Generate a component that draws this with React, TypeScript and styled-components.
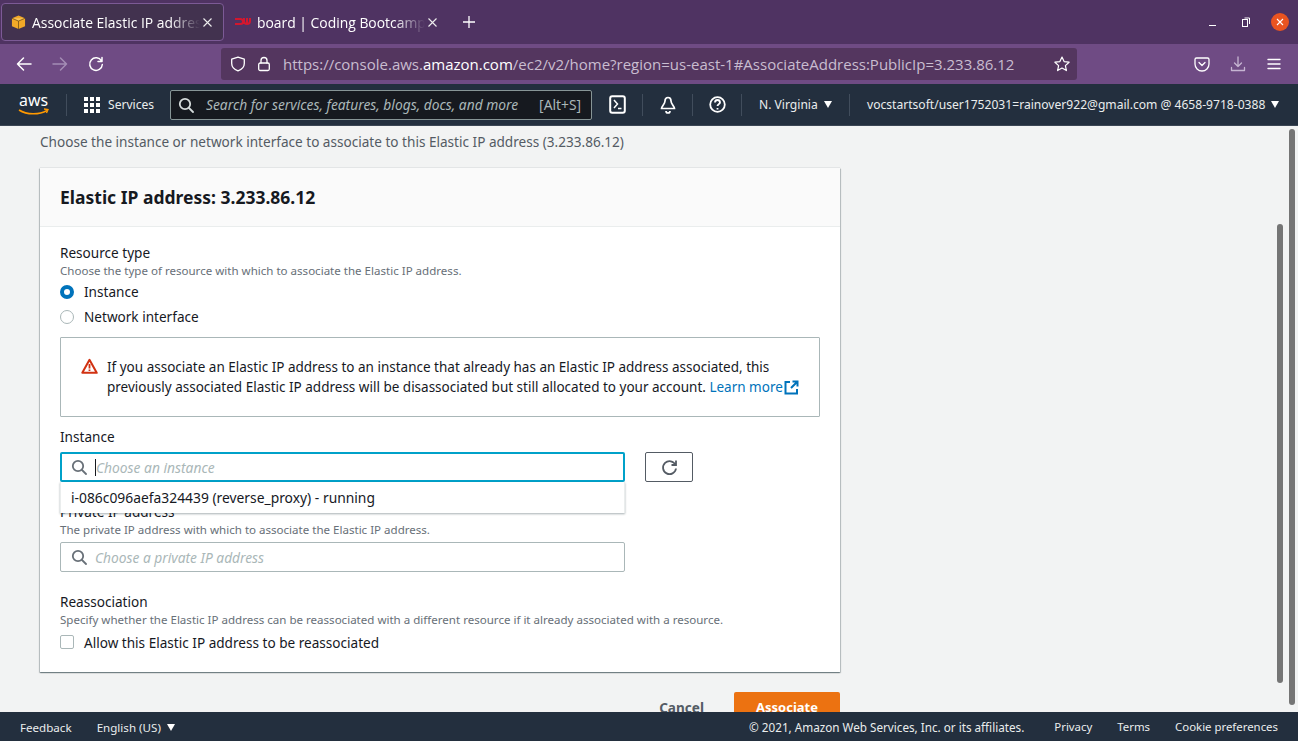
import { createGlobalStyle } from 'styled-components';
import styled from 'styled-components';

const Global = createGlobalStyle`
  html, body { margin: 0; padding: 0; height: 100%; overflow: hidden; }
  * { box-sizing: border-box; }
  body { font-family: "Noto Sans", "Liberation Sans", sans-serif; background: #f2f3f3; }
`;

const Page = styled.div`
  width: 1298px;
  height: 741px;
  display: flex;
  flex-direction: column;
  overflow: hidden;
`;

/* browser chrome */
const TabBar = styled.div`
  height: 44px;
  flex: none;
  background: #4f3362;
  display: flex;
  align-items: center;
  padding: 3px 0 3px 1px;
  color: #fff;
  font-family: "Open Sans", "Noto Sans", sans-serif;
  font-size: 13.9px;
`;

const Tab = styled.div<{ $active?: boolean }>`
  width: 223px;
  height: 38px;
  flex: none;
  display: flex;
  align-items: center;
  padding-left: ${p => (p.$active ? '9px' : '10px')};
  gap: 6px;
  border-radius: 4px;
  border: 1px solid ${p => (p.$active ? '#7c5a96' : 'transparent')};
  background: ${p => (p.$active ? '#42324f' : 'transparent')};
`;

const TabTitle = styled.span`
  width: 168px;
  white-space: nowrap;
  overflow: hidden;
  -webkit-mask-image: linear-gradient(to right, #000 82%, transparent 100%);
  mask-image: linear-gradient(to right, #000 82%, transparent 100%);
`;

const TabClose = styled.span`
  display: flex;
  margin-left: -6px;
`;

const NewTab = styled.span`
  display: flex;
  margin-left: 15px;
`;

const WindowControls = styled.div`
  margin-left: auto;
  display: flex;
  align-items: center;
  gap: 20px;
  padding-right: 9px;
`;

const CloseCircle = styled.span`
  width: 18px;
  height: 18px;
  border-radius: 50%;
  background: #e95420;
  display: flex;
  align-items: center;
  justify-content: center;
`;

const NavBar = styled.div`
  height: 40px;
  flex: none;
  background: #6f4b84;
  display: flex;
  align-items: center;
  padding-left: 16px;
`;

const NavIcons = styled.div`
  display: flex;
  align-items: center;
  gap: 20px;
  width: 205px;
  flex: none;
`;

const UrlBar = styled.div`
  width: 856px;
  height: 32px;
  flex: none;
  background: #54365f;
  border-radius: 3px;
  display: flex;
  align-items: center;
  padding: 0 7px 0 9px;
  font-family: "Open Sans", "Noto Sans", sans-serif;
  font-size: 15px;
  color: #c9bdd0;
  gap: 11px;
`;

const UrlText = styled.span`
  flex: 1;
  white-space: nowrap;
  margin-left: 1px;
  b { font-weight: 400; color: #fff; }
`;

const NavRight = styled.div`
  display: flex;
  align-items: center;
  gap: 20px;
  margin-left: 117px;
`;

/* aws console header */
const AwsHeader = styled.div`
  height: 42px;
  flex: none;
  background: #232f3e;
  border-bottom: 1px solid #3b4654;
  display: flex;
  align-items: center;
  color: #eaeded;
  font-size: 12.1px;
`;

const Logo = styled.div`
  width: 66px;
  flex: none;
  padding-left: 17px;
  display: flex;
  svg { overflow: visible; }
`;

const HeaderDivider = styled.span`
  width: 1px;
  height: 22px;
  background: #414d5c;
  flex: none;
`;

const ServicesButton = styled.div`
  display: flex;
  align-items: center;
  gap: 8px;
  padding-left: 17px;
  width: 103px;
  flex: none;
`;

const Search = styled.div`
  width: 422px;
  height: 30px;
  flex: none;
  background: #16191f;
  border: 1px solid #879596;
  border-radius: 2px;
  display: flex;
  align-items: center;
  padding: 0 10px 0 7px;
  gap: 12px;
  color: #aab7b8;
  font-size: 13.8px;
`;

const SearchText = styled.span`
  flex: 1;
  font-style: italic;
  white-space: nowrap;
`;

const HeaderIcon = styled.div<{ $w: number }>`
  width: ${p => p.$w}px;
  flex: none;
  display: flex;
  justify-content: center;
`;

const HeaderMenu = styled.div<{ $w: number }>`
  width: ${p => p.$w}px;
  flex: none;
  display: flex;
  align-items: center;
  gap: 6px;
  padding-left: 17px;
  white-space: nowrap;
`;

const Caret = styled.span`
  width: 0;
  height: 0;
  border-left: 4.5px solid transparent;
  border-right: 4.5px solid transparent;
  border-top: 7px solid #fff;
  flex: none;
`;

/* scrolling page body */
const Main = styled.div`
  flex: 1;
  min-height: 0;
  position: relative;
  overflow: hidden;
  padding-left: 40px;
  background: #f2f3f3;
`;

const Intro = styled.p`
  margin: 0;
  padding-top: 7px;
  height: 42px;
  font-size: 13.58px;
  line-height: 18px;
  color: #545b64;
`;

const Card = styled.section`
  width: 800px;
  background: #fff;
  box-shadow: 0 0 1px 0 rgba(0, 28, 36, 0.35), 0 1px 1px 0 rgba(0, 28, 36, 0.3), 1px 1px 1px 0 rgba(0, 28, 36, 0.15), -1px 1px 1px 0 rgba(0, 28, 36, 0.15);
`;

const CardHeader = styled.h2`
  margin: 0;
  height: 59px;
  padding: 0 20px;
  display: flex;
  align-items: center;
  background: #fafafa;
  border-bottom: 1px solid #eaeded;
  font-size: 17.5px;
  font-weight: 700;
  color: #16191f;
`;

const CardBody = styled.div`
  padding: 17px 20px 0;
  height: 445px;
`;

const Label = styled.div`
  font-size: 13.58px;
  line-height: 18px;
  color: #16191f;
`;

const Hint = styled.div`
  font-size: 11.55px;
  line-height: 17px;
  color: #687078;
`;

const RadioRow = styled.label`
  display: flex;
  align-items: center;
  gap: 10px;
  height: 25px;
  font-size: 13.58px;
  color: #16191f;
`;

const Radio = styled.span<{ $on?: boolean }>`
  width: 14px;
  height: 14px;
  border-radius: 50%;
  flex: none;
  background: #fff;
  border: ${p => (p.$on ? '4px solid #0073bb' : '1px solid #aab7b8')};
`;

const Alert = styled.div`
  height: 80px;
  margin-top: 8px;
  border: 1px solid #aab7b8;
  border-radius: 1px;
  display: flex;
  align-items: center;
  padding: 0 10px 0 20px;
  gap: 9px;
  font-size: 13.5px;
  line-height: 20px;
  color: #16191f;
`;

const AlertIcon = styled.span`
  display: flex;
  align-self: flex-start;
  margin-top: 20px;
`;

const LearnMore = styled.a`
  color: #0073bb;
  white-space: nowrap;
  svg { vertical-align: -3px; margin-left: 1px; }
`;

const FieldBlock = styled.div<{ $top: number }>`
  margin-top: ${p => p.$top}px;
  position: relative;
`;

const FieldRow = styled.div<{ $top: number }>`
  display: flex;
  align-items: center;
  gap: 20px;
  margin-top: ${p => p.$top}px;
`;

const SearchField = styled.div<{ $focus?: boolean; $size: number }>`
  width: 565px;
  height: 30px;
  flex: none;
  background: #fff;
  border: ${p => (p.$focus ? '2px solid #00a1c9' : '1px solid #aab7b8')};
  border-radius: 2px;
  display: flex;
  align-items: center;
  padding-left: ${p => (p.$focus ? '9px' : '10px')};
  gap: 8px;
  font-size: ${p => p.$size}px;
  font-style: italic;
  color: #aab7b8;
`;

const Cursor = styled.span`
  width: 1px;
  height: 17px;
  background: #16191f;
  margin-right: -8px;
`;

const RefreshButton = styled.div`
  width: 48px;
  height: 30px;
  border: 1px solid #545b64;
  border-radius: 2px;
  display: flex;
  align-items: center;
  justify-content: center;
`;

const Dropdown = styled.div`
  position: absolute;
  left: 0;
  top: 54px;
  width: 565px;
  height: 31px;
  background: #fff;
  box-shadow: 0 1px 2px rgba(0, 28, 36, 0.35);
  border-left: 1px solid #eaeded;
  border-right: 1px solid #eaeded;
  display: flex;
  align-items: center;
  padding-left: 10px;
  font-size: 13.85px;
  color: #16191f;
  z-index: 2;
`;

const CheckRow = styled.label`
  display: flex;
  align-items: center;
  gap: 10px;
  height: 18px;
  margin-top: 5px;
  font-size: 13.58px;
  color: #16191f;
`;

const Checkbox = styled.span`
  width: 14px;
  height: 14px;
  flex: none;
  background: #fff;
  border: 1px solid #aab7b8;
  border-radius: 2px;
`;

const Actions = styled.div`
  width: 800px;
  display: flex;
  justify-content: flex-end;
  align-items: center;
  margin-top: 20px;
  gap: 30px;
`;

const CancelButton = styled.span`
  font-size: 13.58px;
  font-weight: 700;
  color: #545b64;
`;

const PrimaryButton = styled.span`
  width: 106px;
  height: 30px;
  background: #ec7211;
  border-radius: 2px;
  color: #fff;
  font-size: 13px;
  font-weight: 700;
  display: flex;
  align-items: center;
  justify-content: center;
`;

const ScrollThumb = styled.span<{ $right: number; $top: number; $h: number }>`
  position: absolute;
  right: ${p => p.$right}px;
  top: ${p => p.$top}px;
  height: ${p => p.$h}px;
  width: 6px;
  border-radius: 3px;
  background: #757575;
`;

/* console footer */
const Footer = styled.footer`
  height: 29px;
  flex: none;
  background: #232f3e;
  display: flex;
  align-items: center;
  padding: 1px 20px 0;
  font-size: 11.6px;
  color: #eaeded;
`;

const FooterLang = styled.span`
  display: flex;
  align-items: center;
  gap: 6px;
  margin-left: 25px;
`;

const FooterRight = styled.div`
  margin-left: auto;
  display: flex;
  gap: 25px;
`;

const FooterLink = styled.span`
  font-size: 11.4px;
`;

const Copyright = styled.span`
  font-size: 11.7px;
  margin-right: 5px;
`;

const stroke = { fill: 'none', stroke: '#fff', strokeWidth: 1.5, strokeLinecap: 'round', strokeLinejoin: 'round' } as const;

function CloseX() {
  return (
    <svg width="15" height="15" viewBox="0 0 15 15">
      <path d="M3.5 3.5l8 8M11.5 3.5l-8 8" stroke="#eee" strokeWidth="1.1" />
    </svg>
  );
}

function SearchGlyph({ color, width = 1.8 }: { color: string; width?: number }) {
  return (
    <svg width="16" height="16" viewBox="0 0 16 16" fill="none" stroke={color} strokeWidth={width} style={{ flex: 'none' }}>
      <circle cx="7" cy="7" r="5.2" />
      <path d="M11 11l4 4" strokeLinecap="round" />
    </svg>
  );
}

export default function App() {
  return (
    <>
      <Global />
      <Page>
        <TabBar>
          <Tab $active>
            <svg width="15" height="16" viewBox="0 0 16 16">
              <path d="M1 4L8 1l7 3v8.500L8 15.500 1 12.500z" fill="#f2a928" />
              <path d="M1 4l7 3 7-3" fill="#fbc65a" />
              <path d="M1 4l7 3 7-3M8 7v8.500" fill="none" stroke="#6b4a12" strokeWidth="0.8" />
            </svg>
            <TabTitle>Associate Elastic IP address</TabTitle>
            <TabClose><CloseX /></TabClose>
          </Tab>
          <Tab>
            <svg width="16" height="10" viewBox="0 0 16 10" fill="none" stroke="#d3172e" strokeWidth="2">
              <path d="M0 2h5.500a2.500 2.500 0 010 5H0M15 1v3a3 3 0 01-6 0V1M12 1v5" />
            </svg>
            <TabTitle>board | Coding Bootcamp</TabTitle>
            <TabClose><CloseX /></TabClose>
          </Tab>
          <NewTab>
            <svg width="14" height="14" viewBox="0 0 14 14"><path d="M7 1v12M1 7h12" stroke="#fff" strokeWidth="1.3" /></svg>
          </NewTab>
          <WindowControls>
            <svg width="14" height="10" viewBox="0 0 14 10"><path d="M2 8.500h7" stroke="#fff" strokeWidth="1" /></svg>
            <svg width="10" height="10" viewBox="0 0 10 10" fill="none" stroke="#fff"><rect x="1.500" y="2.500" width="5" height="7" /><path d="M3.500 1h5v6" /></svg>
            <CloseCircle>
              <svg width="8" height="8" viewBox="0 0 8 8"><path d="M1 1l6 6M7 1L1 7" stroke="#fff" strokeWidth="1.1" /></svg>
            </CloseCircle>
          </WindowControls>
        </TabBar>

        <NavBar>
          <NavIcons>
            <svg width="16" height="16" viewBox="0 0 16 16" {...stroke}><path d="M15 8H1.500M7.500 2L1.500 8l6 6" /></svg>
            <svg width="16" height="16" viewBox="0 0 16 16" {...stroke} stroke="#a48db5"><path d="M1 8h13.500M8.500 2l6 6-6 6" /></svg>
            <svg width="16" height="16" viewBox="0 0 16 16" {...stroke}><path d="M13.500 5A6.300 6.300 0 1014.300 8.500M14 1.500V5.500H10" /></svg>
          </NavIcons>
          <UrlBar>
            <svg width="16" height="16" viewBox="0 0 16 16" {...stroke} strokeWidth={1.3}><path d="M8 1.200l6.300 2v4.300c0 3.600-2.800 6-6.300 7.300-3.500-1.300-6.300-3.700-6.300-7.300V3.200z" /></svg>
            <svg width="14" height="16" viewBox="0 0 14 16" {...stroke} strokeWidth={1.3}><rect x="1.700" y="7" width="10.600" height="7.500" rx="1.500" /><path d="M4 7V4.500a3 3 0 016 0V7" /></svg>
            <UrlText>https://console.aws.<b>amazon.com</b>/ec2/v2/home?region=us-east-1#AssociateAddress:PublicIp=3.233.86.12</UrlText>
            <svg width="16" height="16" viewBox="0 0 16 16" {...stroke} strokeWidth={1.2}><path d="M8 1l2.100 4.600 5 .6-3.700 3.400 1 5L8 12.100l-4.400 2.500 1-5L.9 6.200l5-.6z" /></svg>
          </UrlBar>
          <NavRight>
            <svg width="16" height="16" viewBox="0 0 16 16" {...stroke} strokeWidth={1.3}><path d="M2.500 2h11A1.500 1.500 0 0115 3.500V8a7 7 0 01-14 0V3.500A1.500 1.500 0 012.500 2zM5 6.500L8 9.500l3-3" /></svg>
            <svg width="16" height="16" viewBox="0 0 16 16" {...stroke} stroke="#c6b5d2" strokeWidth={1.3}><path d="M8 1v9.500M4.500 7L8 10.500 11.500 7M1.500 11.500v3h13v-3" /></svg>
            <svg width="16" height="16" viewBox="0 0 16 16" {...stroke} strokeWidth={1.4}><path d="M2 3.500h12M2 8h12M2 12.500h12" /></svg>
          </NavRight>
        </NavBar>

        <AwsHeader>
          <Logo>
            <svg width="34" height="26" viewBox="0 0 34 26">
              <text x="2" y="14" fontFamily="Noto Sans, sans-serif" fontSize="17" fill="#fff" textLength="29" lengthAdjust="spacingAndGlyphs">aws</text>
              <path d="M2 18c8 5 20 5 28 .5" fill="none" stroke="#f90" strokeWidth="1.500" />
              <path d="M27 17l4 .5-1.500 3.500" fill="none" stroke="#f90" strokeWidth="1.300" />
            </svg>
          </Logo>
          <HeaderDivider />
          <ServicesButton>
            <svg width="16" height="16" viewBox="0 0 16 16" fill="#fff">
              {[0, 6, 12].flatMap(y => [0, 6, 12].map(x => <rect key={`${x}-${y}`} x={x} y={y} width="4" height="4" />))}
            </svg>
            Services
          </ServicesButton>
          <Search>
            <SearchGlyph color="#d5dbdb" />
            <SearchText>Search for services, features, blogs, docs, and more</SearchText>
            <span>[Alt+S]</span>
          </Search>
          <HeaderIcon $w={50}>
            <svg width="17" height="19" viewBox="0 0 17 19" fill="none" stroke="#fff" strokeWidth="2"><rect x="1.200" y="1.200" width="14.600" height="16.600" rx="2" /><path d="M5 5l3.500 4L5 13M9 13.500h3.500" strokeWidth="1.500" /></svg>
          </HeaderIcon>
          <HeaderDivider />
          <HeaderIcon $w={49}>
            <svg width="16" height="18" viewBox="0 0 16 18" fill="none" stroke="#fff" strokeWidth="1.700"><path d="M8 1.500c-2 0-3 1.500-3 3.500 0 3-3.500 5.500-3.500 7.500h13c0-2-3.500-4.500-3.500-7.500 0-2-1-3.500-3-3.500zM6 15a2 2 0 004 0" /></svg>
          </HeaderIcon>
          <HeaderDivider />
          <HeaderIcon $w={48}>
            <svg width="17" height="17" viewBox="0 0 17 17" fill="none" stroke="#fff" strokeWidth="1.800"><circle cx="8.500" cy="8.500" r="7.300" /><path d="M6 6.500a2.500 2.500 0 115 0c0 1.500-2.500 1.800-2.500 3.500M8.500 12v1.500" /></svg>
          </HeaderIcon>
          <HeaderDivider />
          <HeaderMenu $w={107}>N. Virginia <Caret /></HeaderMenu>
          <HeaderDivider />
          <HeaderMenu $w={430}>vocstartsoft/user1752031=rainover922@gmail.com @ 4658-9718-0388 <Caret /></HeaderMenu>
        </AwsHeader>

        <Main>
          <Intro>Choose the instance or network interface to associate to this Elastic IP address (3.233.86.12)</Intro>
          <Card>
            <CardHeader>Elastic IP address: 3.233.86.12</CardHeader>
            <CardBody>
              <Label>Resource type</Label>
              <Hint>Choose the type of resource with which to associate the Elastic IP address.</Hint>
              <RadioRow><Radio $on />Instance</RadioRow>
              <RadioRow><Radio />Network interface</RadioRow>
              <Alert>
                <AlertIcon>
                  <svg width="17" height="16" viewBox="0 0 17 16" fill="none">
                    <path d="M8.500 1.800L15.700 14.800H1.300z" stroke="#d13212" strokeWidth="2" strokeLinejoin="round" />
                    <path d="M8.500 6v4.500M8.500 11.500v1.500" stroke="#d13212" strokeWidth="1.800" />
                  </svg>
                </AlertIcon>
                <div>
                  If you associate an Elastic IP address to an instance that already has an Elastic IP address associated, this previously associated Elastic IP address will be disassociated but still allocated to your account.{' '}
                  <LearnMore>
                    Learn more
                    <svg width="15" height="15" viewBox="0 0 15 15" fill="none" stroke="#0073bb" strokeWidth="2">
                      <path d="M6 2H1.500v11.500H13V9M7 8l6-6M8.500 1.500H13.500V6.500" />
                    </svg>
                  </LearnMore>
                </div>
              </Alert>
              <FieldBlock $top={11}>
                <Label>Instance</Label>
                <FieldRow $top={6}>
                  <SearchField $focus $size={13.8}>
                    <SearchGlyph color="#687078" />
                    <Cursor />
                    Choose an instance
                  </SearchField>
                  <RefreshButton>
                    <svg width="17" height="17" viewBox="0 0 17 17" fill="none" stroke="#545b64" strokeWidth="1.800">
                      <path d="M14.500 6A6.500 6.500 0 1015 9.500M15 1.500V6h-4.500" />
                    </svg>
                  </RefreshButton>
                </FieldRow>
                <Dropdown>i-086c096aefa324439 (reverse_proxy) - running</Dropdown>
              </FieldBlock>
              <FieldBlock $top={21}>
                <Label>Private IP address</Label>
                <Hint>The private IP address with which to associate the Elastic IP address.</Hint>
                <FieldRow $top={4}>
                  <SearchField $size={13.75}>
                    <SearchGlyph color="#687078" />
                    Choose a private IP address
                  </SearchField>
                </FieldRow>
              </FieldBlock>
              <FieldBlock $top={21}>
                <Label>Reassociation</Label>
                <Hint>Specify whether the Elastic IP address can be reassociated with a different resource if it already associated with a resource.</Hint>
                <CheckRow><Checkbox />Allow this Elastic IP address to be reassociated</CheckRow>
              </FieldBlock>
            </CardBody>
          </Card>
          <Actions>
            <CancelButton>Cancel</CancelButton>
            <PrimaryButton>Associate</PrimaryButton>
          </Actions>
          <ScrollThumb $right={15} $top={98} $h={459} />
          <ScrollThumb $right={3} $top={3} $h={576} />
        </Main>

        <Footer>
          Feedback
          <FooterLang>English (US) <Caret /></FooterLang>
          <FooterRight>
            <Copyright>© 2021, Amazon Web Services, Inc. or its affiliates.</Copyright>
            <FooterLink>Privacy</FooterLink>
            <FooterLink>Terms</FooterLink>
            <FooterLink>Cookie preferences</FooterLink>
          </FooterRight>
        </Footer>
      </Page>
    </>
  );
}
